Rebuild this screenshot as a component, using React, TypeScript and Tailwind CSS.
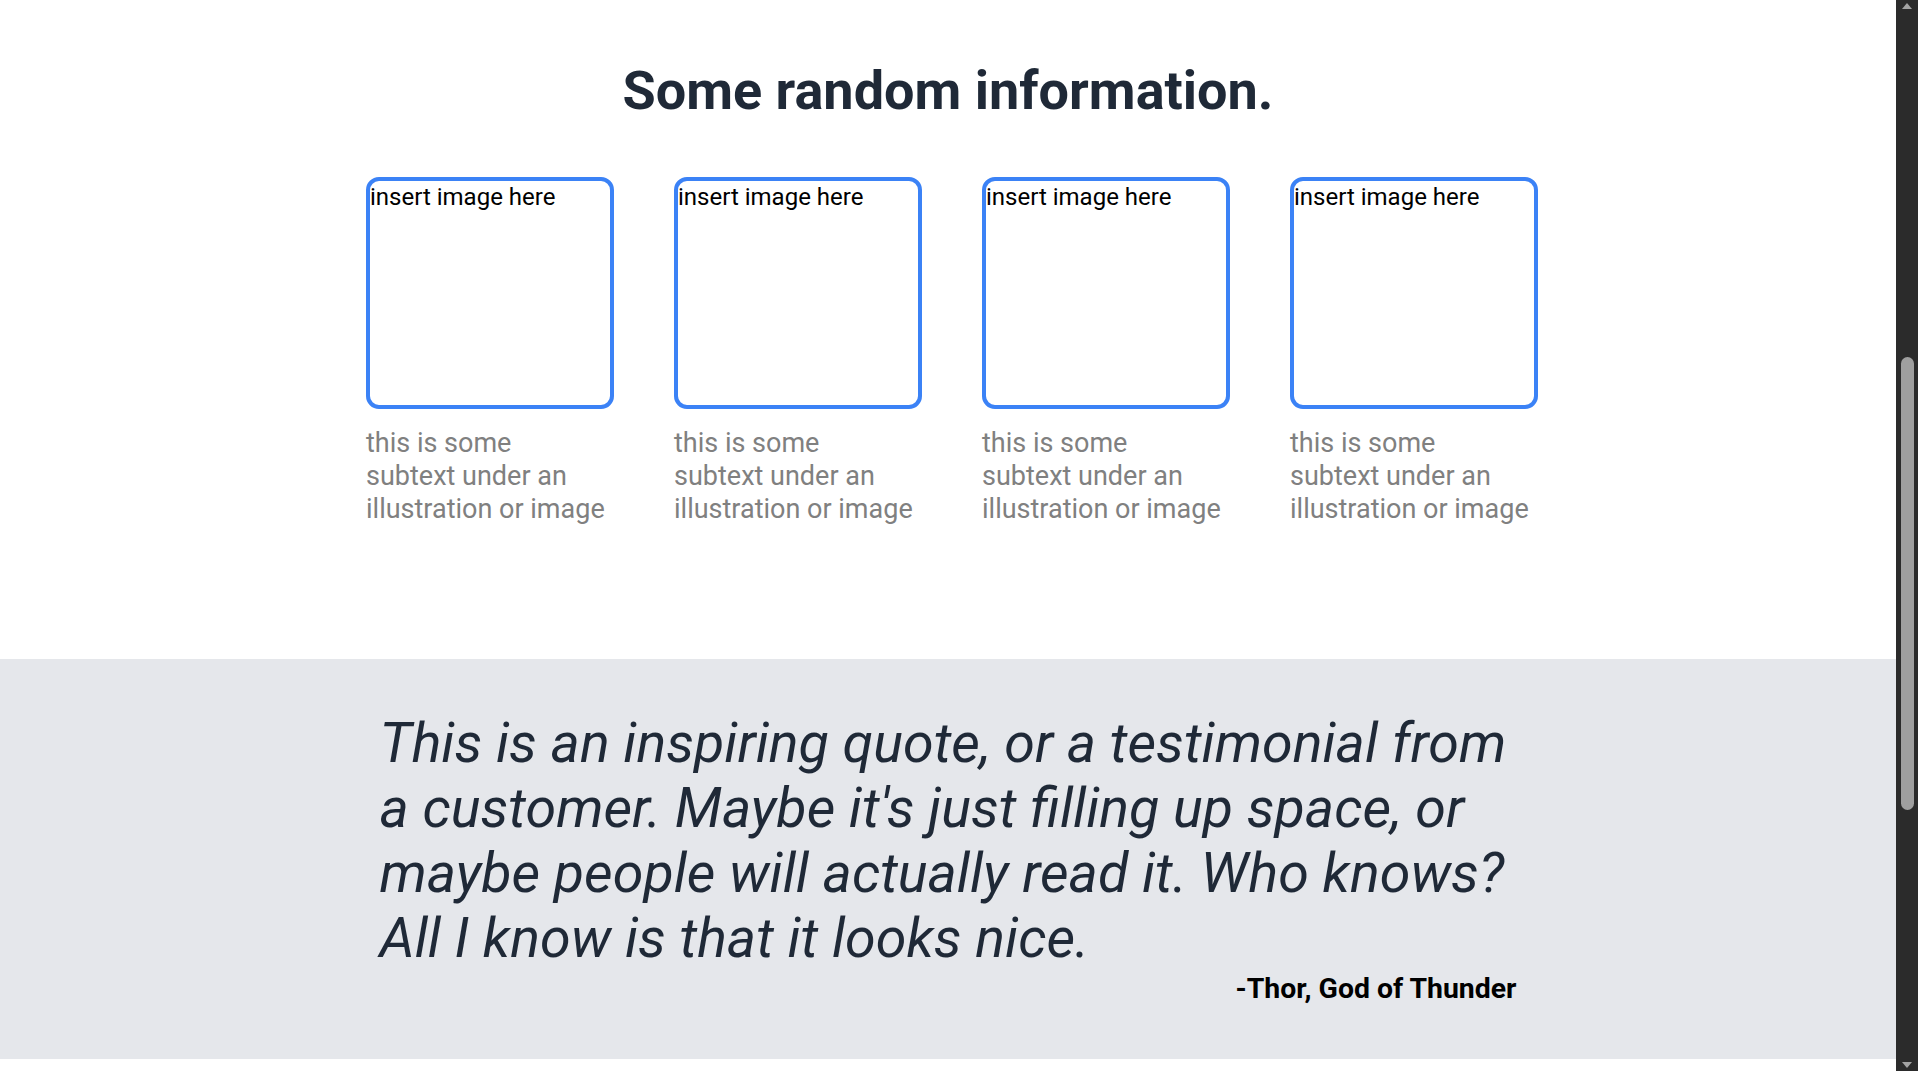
import React from 'react';

const cards = [1, 2, 3, 4];

function ScrollArrow({ down }: { down?: boolean }) {
  return (
    <svg width="10" height="6" viewBox="0 0 10 6" className="mx-auto">
      {down ? <path d="M0 0 L10 0 L5 6 Z" fill="#a3a3a3" /> : <path d="M5 0 L10 6 L0 6 Z" fill="#a3a3a3" />}
    </svg>
  );
}

export default function App() {
  return (
    <div className="flex h-screen overflow-hidden bg-white font-['Roboto',sans-serif]">
      <main className="min-w-0 flex-1 overflow-hidden">
        <section className="pt-[61px] pb-[133px]">
          <h2 className="text-center text-[54px] leading-[60px] font-bold text-[#1f2937]">
            Some random information.
          </h2>
          <div className="mt-[56px] flex justify-center gap-[60px] pl-[8px]">
            {cards.map((c) => (
              <div key={c} className="w-[248px]">
                <div className="h-[232px] rounded-[13px] border-4 border-[#3b82f6] text-[24px] leading-[32px] text-black">
                  insert image here
                </div>
                <p className="mt-[18px] max-w-[240px] text-[27px] leading-[33px] text-[#808080]">
                  this is some subtext under an illustration or image
                </p>
              </div>
            ))}
          </div>
        </section>

        <section className="bg-[#e5e7eb] pt-[52px] pb-[52px]">
          <div className="mx-auto w-[1137px]">
            <p className="text-[55.6px] leading-[65px] italic text-[#1f2937]">
              This is an inspiring quote, or a testimonial from a customer. Maybe it's just filling up
              space, or maybe people will actually read it. Who knows? All I know is that it looks nice.
            </p>
            <p className="text-right text-[28.4px] leading-[36px] font-bold text-black">-Thor, God of Thunder</p>
          </div>
        </section>

        <div className="h-[160px] bg-white" />
      </main>

      {/* page scrollbar, page is scrolled partway down */}
      <aside className="flex w-[22px] shrink-0 flex-col bg-[#2b2b2b] py-[3px]">
        <ScrollArrow />
        <div className="mx-auto mt-[348px] h-[453px] w-[13px] rounded-full bg-[#9f9f9f]" />
        <div className="flex-1" />
        <ScrollArrow down />
      </aside>
    </div>
  );
}
